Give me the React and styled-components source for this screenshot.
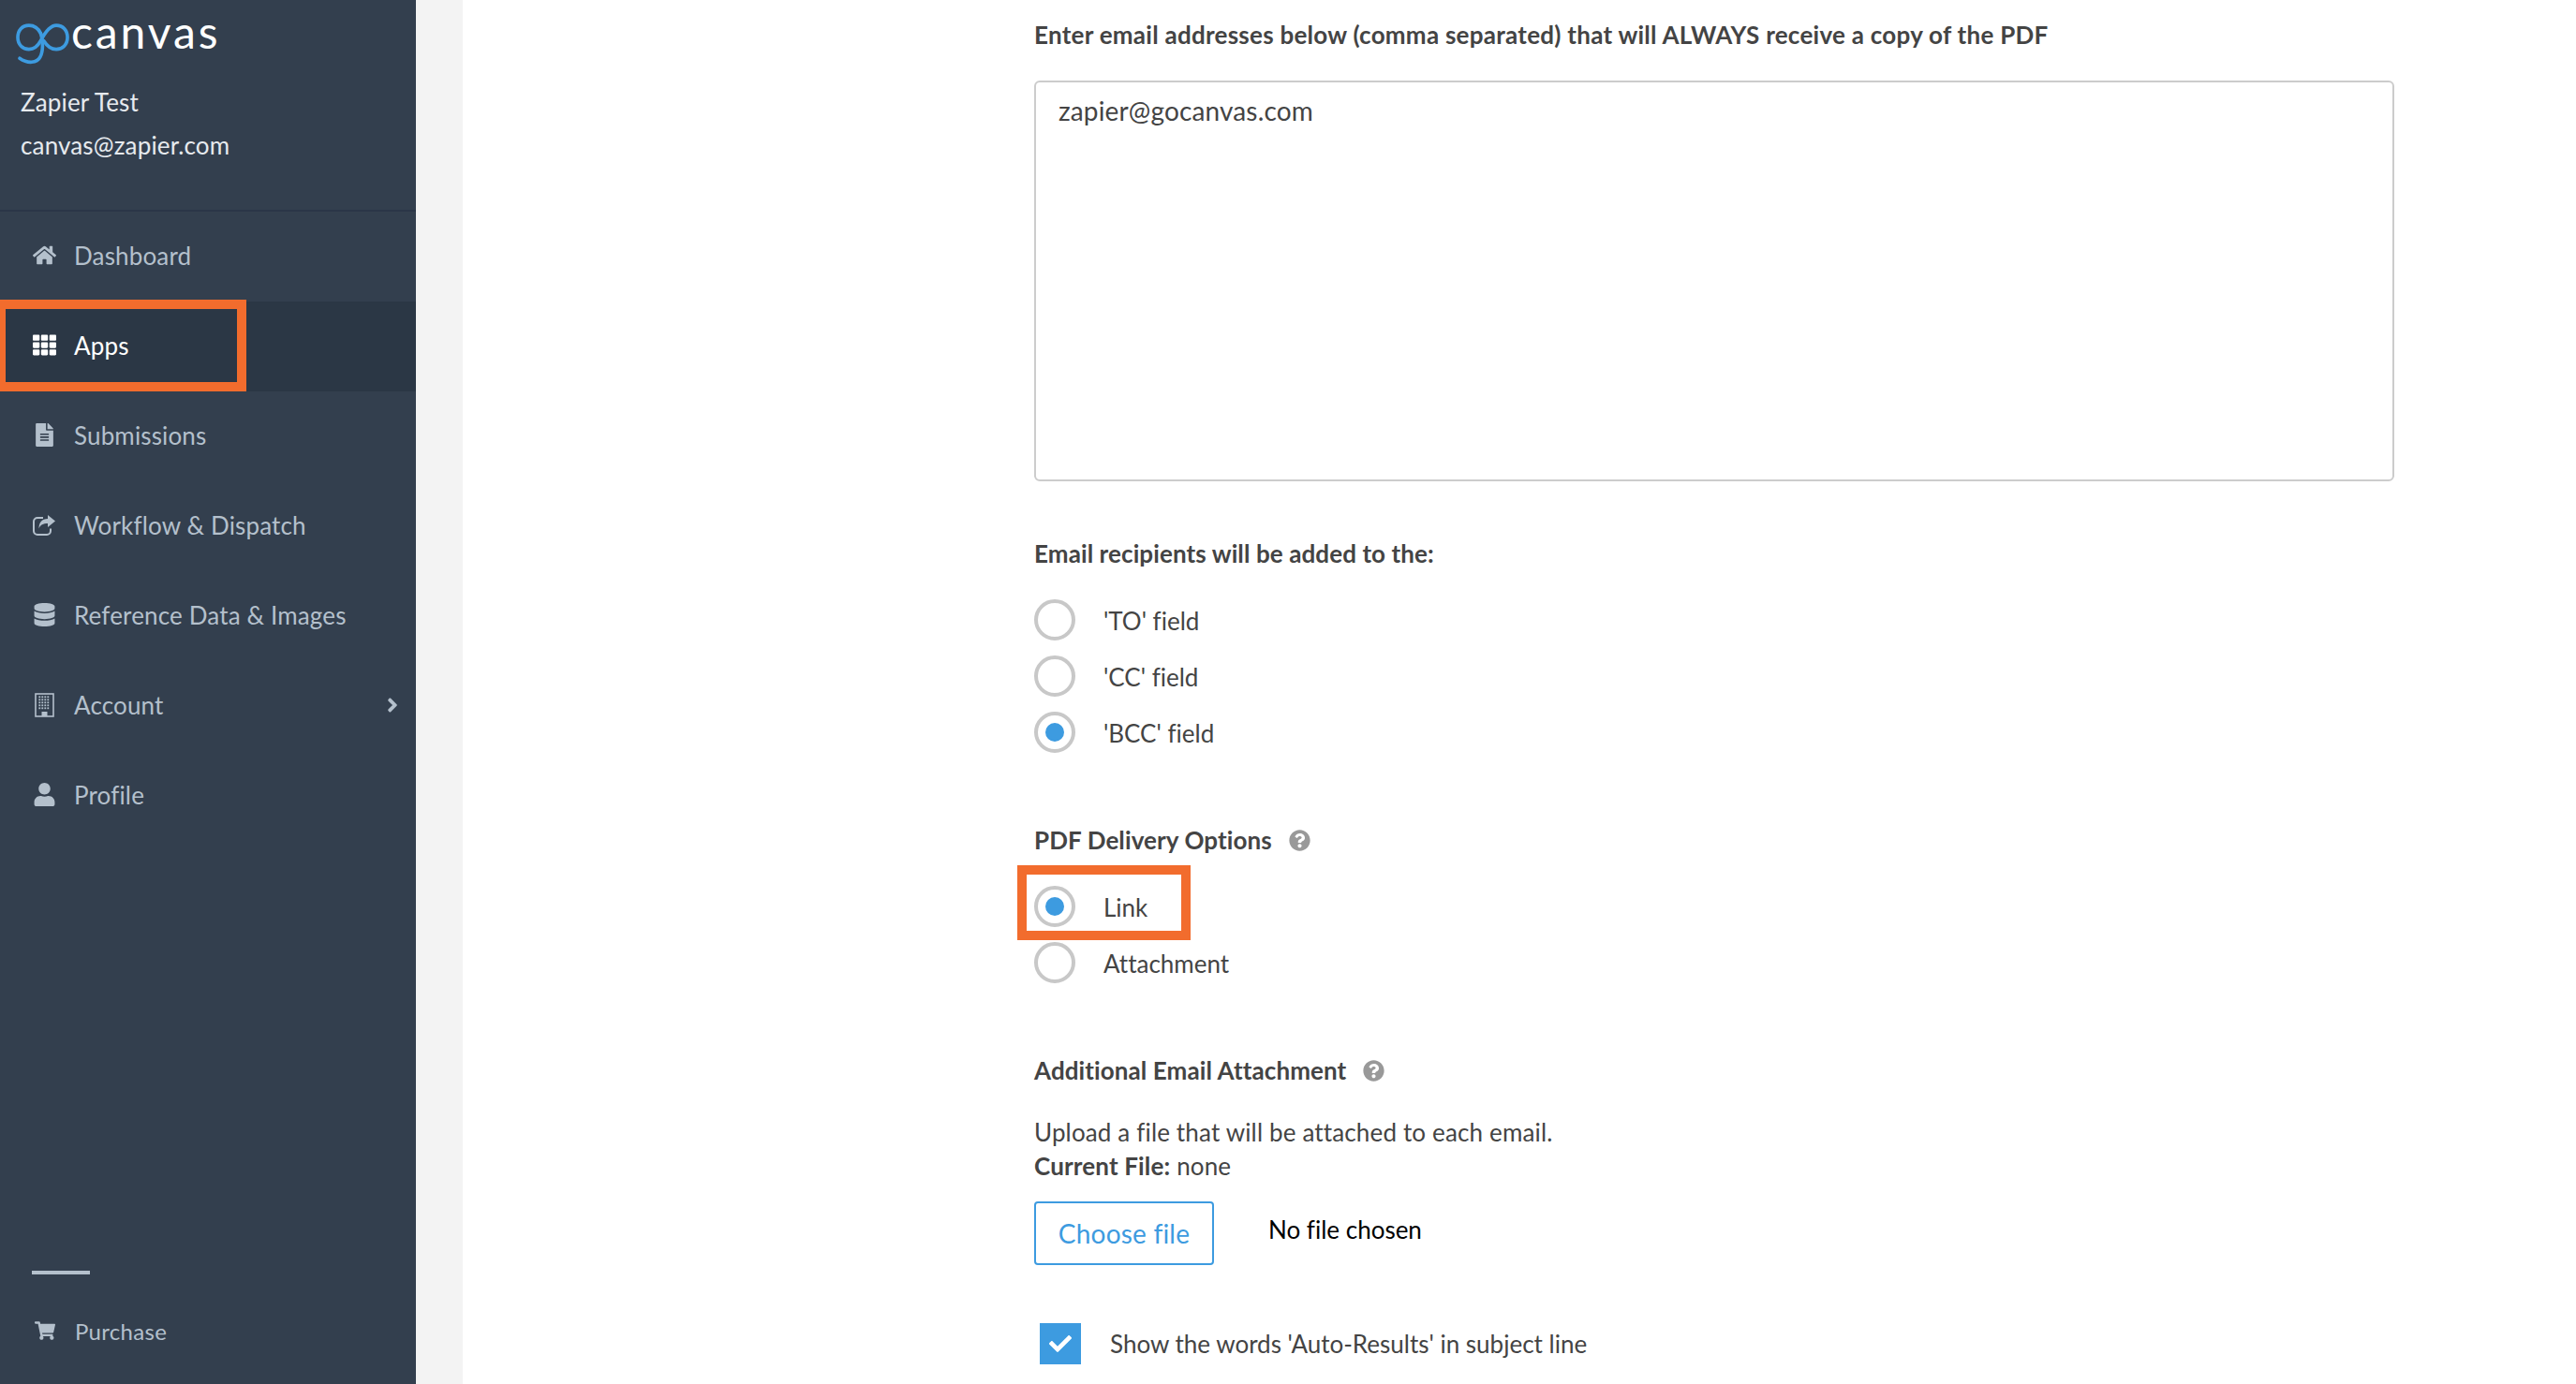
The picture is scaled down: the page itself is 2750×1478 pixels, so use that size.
import React from "react";
import styled, { createGlobalStyle } from "styled-components";
import {
  FaHome,
  FaTh,
  FaFileAlt,
  FaDatabase,
  FaUser,
  FaShoppingCart,
  FaQuestionCircle,
  FaCheck,
  FaAngleRight,
} from "react-icons/fa";

function ShareIcon() {
  return (
    <svg width="26" height="24" viewBox="0 0 26 24" fill="none">
      <path
        d="M20 15.5V18a4 4 0 0 1-4 4H6a4 4 0 0 1-4-4V8a4 4 0 0 1 4-4h6"
        stroke="currentColor"
        strokeWidth="2"
      />
      <path d="M17 1l8 6.5-8 6.5V10c-5 0-8 1.5-9.5 5.5C7.5 9 11 5 17 5z" fill="currentColor" />
    </svg>
  );
}

function BuildingIcon() {
  const dots = [];
  for (let row = 0; row < 5; row++) {
    for (let col = 0; col < 4; col++) {
      dots.push(<rect key={`${row}-${col}`} x={4.4 + col * 3} y={3.4 + row * 3} width="1.8" height="1.8" />);
    }
  }
  return (
    <svg width="21" height="26" viewBox="0 0 21 26" fill="currentColor">
      <rect x="1" y="1" width="19" height="24" fill="none" stroke="currentColor" strokeWidth="1.6" />
      {dots}
      <rect x="7.5" y="20" width="6" height="5" />
    </svg>
  );
}

const navItems = [
  { label: "Dashboard", icon: FaHome },
  { label: "Apps", icon: FaTh, active: true },
  { label: "Submissions", icon: FaFileAlt },
  { label: "Workflow & Dispatch", icon: ShareIcon },
  { label: "Reference Data & Images", icon: FaDatabase },
  { label: "Account", icon: BuildingIcon, arrow: true },
  { label: "Profile", icon: FaUser },
];

function Radio({ label, checked }) {
  return (
    <RadioRow>
      <RadioCircle>{checked && <RadioDot />}</RadioCircle>
      <RadioLabel>{label}</RadioLabel>
    </RadioRow>
  );
}

export default function App() {
  return (
    <>
      <GlobalStyle />
      <Page>
        <Sidebar>
          <Brand>
            <Logo viewBox="20 30 172 132" fill="none" stroke="#3d9be0" strokeWidth="11" strokeLinecap="round">
              <path d="M100 62C92 45 78 36 62 36C40 36 26 52 26 75C26 98 42 113 62 113C80 113 92 100 100 85C112 62 128 36 150 36C172 36 186 52 186 75C186 98 170 113 150 113C132 113 120 102 110 86" />
              <path d="M100 62C108 85 108 120 98 138C88 158 58 160 32 142" />
            </Logo>
            <BrandName>canvas</BrandName>
          </Brand>
          <UserBlock>
            <UserLine>Zapier Test</UserLine>
            <UserLine>canvas@zapier.com</UserLine>
          </UserBlock>
          <Nav>
            {navItems.map(({ label, icon: Icon, active, arrow }) => (
              <NavItem key={label} $active={active}>
                <NavIcon $active={active}>
                  <Icon />
                </NavIcon>
                {label}
                {arrow && (
                  <NavArrow>
                    <FaAngleRight />
                  </NavArrow>
                )}
                {active && <Highlight $left={-4} $top={-2} $width={267} $height={98} />}
              </NavItem>
            ))}
          </Nav>
          <SidebarFooter>
            <FooterRule />
            <PurchaseRow>
              <NavIcon>
                <FaShoppingCart size={22} />
              </NavIcon>
              Purchase
            </PurchaseRow>
          </SidebarFooter>
        </Sidebar>
        <Gutter />
        <Main>
          <Form>
            <TopHeading>
              Enter email addresses below (comma separated) that will ALWAYS receive a copy of the PDF
            </TopHeading>
            <EmailBox>zapier@gocanvas.com</EmailBox>

            <SectionHeading $top={60}>Email recipients will be added to the:</SectionHeading>
            <RadioGroup>
              <Radio label="'TO' field" />
              <Radio label="'CC' field" />
              <Radio label="'BCC' field" checked />
            </RadioGroup>

            <SectionHeading $top={76}>
              PDF Delivery Options
              <HelpIcon>
                <FaQuestionCircle />
              </HelpIcon>
            </SectionHeading>
            <RadioGroup>
              <HighlightWrap>
                <Radio label="Link" checked />
                <Highlight $left={-18} $top={-22} $width={185} $height={80} />
              </HighlightWrap>
              <Radio label="Attachment" />
            </RadioGroup>

            <SectionHeading $top={76}>
              Additional Email Attachment
              <HelpIcon>
                <FaQuestionCircle />
              </HelpIcon>
            </SectionHeading>
            <UploadText>
              Upload a file that will be attached to each email.
              <br />
              <strong>Current File:</strong> none
            </UploadText>
            <FileRow>
              <ChooseButton>Choose file</ChooseButton>
              <NoFile>No file chosen</NoFile>
            </FileRow>
            <CheckRow>
              <CheckBox>
                <FaCheck />
              </CheckBox>
              Show the words 'Auto-Results' in subject line
            </CheckRow>
          </Form>
        </Main>
      </Page>
    </>
  );
}

const GlobalStyle = createGlobalStyle`
  html, body {
    margin: 0;
    padding: 0;
    background: #fff;
  }
  * {
    box-sizing: border-box;
  }
`;

const Page = styled.div`
  display: flex;
  width: 2750px;
  height: 1478px;
  overflow: hidden;
  font-family: "Lato", "Liberation Sans", sans-serif;
  font-size: 26px;
  font-variant-ligatures: none;
  letter-spacing: 0.15px;
  color: #444;
`;

const Sidebar = styled.aside`
  display: flex;
  flex-direction: column;
  width: 444px;
  flex-shrink: 0;
  background: #333f4e;
`;

const Brand = styled.div`
  display: flex;
  align-items: flex-start;
  height: 74px;
  padding: 25px 0 0 17px;
`;

const Logo = styled.svg`
  width: 57px;
  height: 44px;
  flex-shrink: 0;
`;

const BrandName = styled.span`
  margin: -21px 0 0 2px;
  font-size: 48px;
  line-height: 60px;
  letter-spacing: 2.9px;
  color: #fff;
`;

const UserBlock = styled.div`
  height: 152px;
  padding: 12px 0 0 22px;
  border-bottom: 2px solid #2b3648;
`;

const UserLine = styled.div`
  height: 46px;
  line-height: 46px;
  color: #e6eaee;
`;

const Nav = styled.nav`
  display: flex;
  flex-direction: column;
`;

const NavItem = styled.div`
  position: relative;
  display: flex;
  align-items: center;
  height: 96px;
  padding: 0 0 3px 33px;
  background: ${(p) => (p.$active ? "#2b3745" : "transparent")};
  color: ${(p) => (p.$active ? "#fff" : "#b4c0cc")};
`;

const NavIcon = styled.span`
  display: flex;
  align-items: center;
  justify-content: center;
  width: 28px;
  margin-right: 18px;
  font-size: 25px;
  color: ${(p) => (p.$active ? "#fff" : "#b4c0cc")};
`;

const NavArrow = styled.span`
  display: flex;
  margin-left: auto;
  margin-right: 13px;
  font-size: 24px;
`;

const Highlight = styled.div`
  position: absolute;
  left: ${(p) => p.$left}px;
  top: ${(p) => p.$top}px;
  width: ${(p) => p.$width}px;
  height: ${(p) => p.$height}px;
  border: 10px solid #f26c2d;
  pointer-events: none;
`;

const SidebarFooter = styled.div`
  margin-top: auto;
  padding: 0 0 34px 34px;
  color: #b4c0cc;
`;

const FooterRule = styled.div`
  width: 62px;
  height: 4px;
  background: #b4c0cc;
`;

const PurchaseRow = styled.div`
  display: flex;
  align-items: center;
  height: 46px;
  margin-top: 37px;
  font-size: 24px;
  letter-spacing: 0.3px;
`;

const Gutter = styled.div`
  width: 50px;
  flex-shrink: 0;
  background: #f3f3f3;
`;

const Main = styled.main`
  flex: 1;
  padding-left: 610px;
`;

const Form = styled.div`
  width: 1452px;
`;

const TopHeading = styled.div`
  height: 86px;
  padding-top: 20px;
  line-height: 34px;
  font-weight: 700;
  letter-spacing: 0.26px;
`;

const EmailBox = styled.div`
  height: 428px;
  padding: 13px 24px;
  font-size: 28px;
  letter-spacing: 0.15px;
  line-height: 34px;
  border: 2px solid #ccc;
  border-radius: 6px;
`;

const SectionHeading = styled.div`
  display: flex;
  align-items: center;
  height: 34px;
  margin-top: ${(p) => p.$top}px;
  font-weight: 700;
  letter-spacing: 0.1px;
`;

const HelpIcon = styled.span`
  display: flex;
  margin-left: 18px;
  font-size: 23px;
  color: #999;
`;

const RadioGroup = styled.div`
  display: flex;
  flex-direction: column;
  gap: 16px;
  margin-top: 32px;
`;

const HighlightWrap = styled.div`
  position: relative;
`;

const RadioRow = styled.div`
  display: flex;
  align-items: center;
  height: 44px;
`;

const RadioCircle = styled.span`
  display: flex;
  align-items: center;
  justify-content: center;
  width: 44px;
  height: 44px;
  border: 4px solid #c8c8c8;
  border-radius: 50%;
  background: #fff;
`;

const RadioDot = styled.span`
  width: 20px;
  height: 20px;
  border-radius: 50%;
  background: #3d9be0;
`;

const RadioLabel = styled.span`
  margin: 2px 0 0 30px;
  letter-spacing: 0;
`;

const UploadText = styled.div`
  margin-top: 31px;
  line-height: 36px;
  strong {
    font-weight: 700;
  }
`;

const FileRow = styled.div`
  display: flex;
  align-items: center;
  margin-top: 20px;
`;

const ChooseButton = styled.div`
  display: flex;
  align-items: center;
  justify-content: center;
  width: 192px;
  height: 68px;
  border: 2px solid #3d9be0;
  border-radius: 4px;
  color: #3d9be0;
  font-size: 28px;
  letter-spacing: 0.2px;
`;

const NoFile = styled.span`
  margin: -8px 0 0 58px;
  color: #000;
  letter-spacing: 0;
`;

const CheckRow = styled.div`
  display: flex;
  align-items: center;
  margin-top: 62px;
  padding-left: 6px;
  letter-spacing: 0;
`;

const CheckBox = styled.span`
  display: flex;
  align-items: center;
  justify-content: center;
  width: 44px;
  height: 44px;
  margin-right: 31px;
  background: #3d9be0;
  color: #fff;
  font-size: 24px;
`;
